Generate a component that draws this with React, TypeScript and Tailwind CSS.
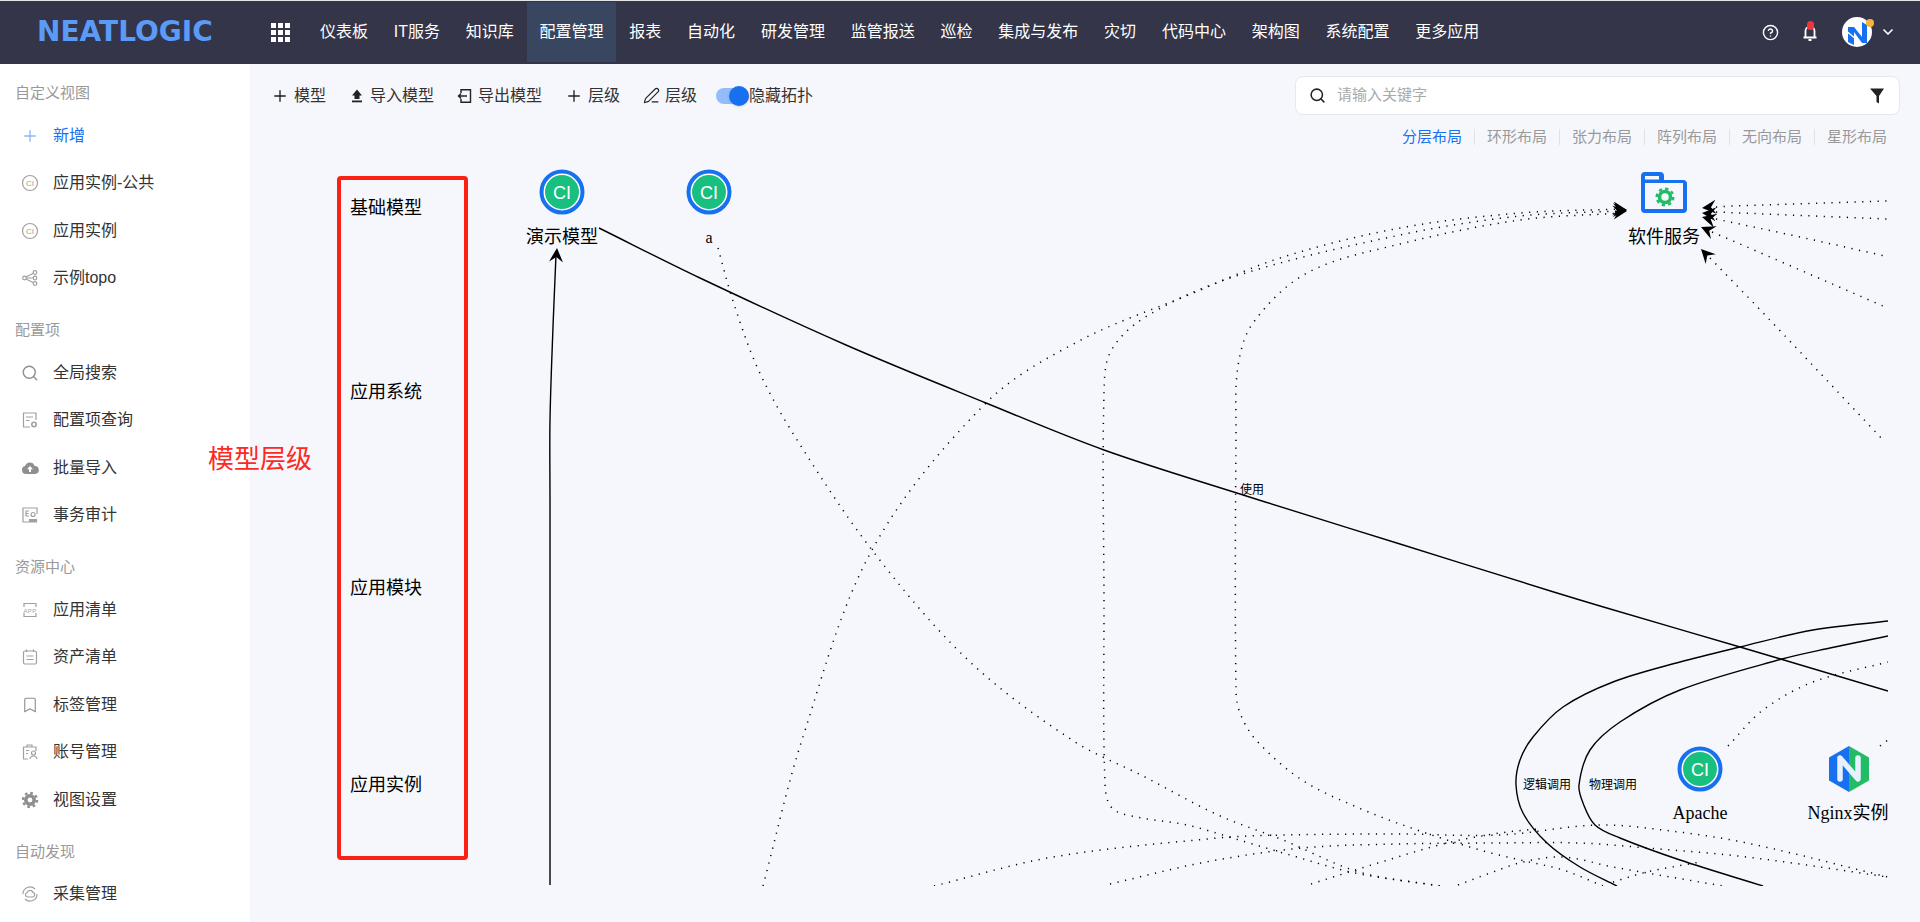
import React from "react";
import { Plus, PenLine, Search, Bookmark, CircleHelp, ChevronDown } from "lucide-react";

// --- data ---
const navItems = ["仪表板", "IT服务", "知识库", "配置管理", "报表", "自动化", "研发管理", "监管报送", "巡检", "集成与发布", "灾切", "代码中心", "架构图", "系统配置", "更多应用"];
const layouts = ["分层布局", "环形布局", "张力布局", "阵列布局", "无向布局", "星形布局"];

// --- sidebar icons ---
const G = ({ children }: { children: React.ReactNode }) => (
  <svg width="18" height="18" viewBox="0 0 18 18" fill="none" stroke="#a0a0a0" strokeWidth="1.2" className="shrink-0">{children}</svg>
);
const IconCi = () => (
  <G>
    <circle cx="9" cy="9" r="7.5" />
    <text x="9" y="12" textAnchor="middle" fontSize="8" fill="#a0a0a0" stroke="none">CI</text>
  </G>
);
const IconTopo = () => (
  <G>
    <circle cx="3.5" cy="9" r="1.8" /><circle cx="14" cy="3.5" r="1.8" /><circle cx="14" cy="9" r="1.8" /><circle cx="14" cy="14.5" r="1.8" />
    <path d="M5.3 9H12.2M5 8L12.4 4.3M5 10L12.4 13.7" />
  </G>
);
const IconCfg = () => (
  <G>
    <path d="M9 16H2.5V2H15V9" />
    <path d="M5 6H12M5 9.5H8.5" />
    <circle cx="13" cy="13.5" r="2.2" strokeWidth="1.6" />
  </G>
);
const IconCloud = () => (
  <svg width="18" height="18" viewBox="0 0 18 18" className="shrink-0">
    <path d="M5 15a4 4 0 0 1-.9-7.900A5 5 0 0 1 13.600 7 4 4 0 0 1 14 15Z" fill="#8f8f8f" />
    <path d="M9 7l3 3.200h-2V13H8v-2.800H6Z" fill="#fff" />
  </svg>
);
const IconAudit = () => (
  <G>
    <path d="M8 16H2V2H16V8" />
    <path d="M8 5H5V10H8M5 7.500H7.500" />
    <circle cx="12" cy="8.500" r="2" />
    <path d="M8.500 16V13.500H15.500V16Z" fill="#a0a0a0" />
  </G>
);
const IconApp = () => (
  <G>
    <path d="M3 6V2.500H15V6M3 12V15.500H15V12" />
    <text x="9" y="11.500" textAnchor="middle" fontSize="6" fill="#a0a0a0" stroke="none" letterSpacing="0.4">APP</text>
  </G>
);
const IconAsset = () => (
  <G>
    <rect x="2.500" y="3" width="13" height="13" rx="1.500" />
    <path d="M5.500 1.500V4M12.500 1.500V4M5.500 8H12.500M5.500 11.500H12.500" />
  </G>
);
const IconAccount = () => (
  <G>
    <path d="M7 16H2.500V4H15V8" />
    <path d="M6 4V2H11V4M5 7.500H8M5 10.500H7" />
    <circle cx="12.500" cy="10" r="2" />
    <path d="M9 16c.3-2 1.700-3 3.500-3s3.200 1 3.500 3" />
  </G>
);
const IconGear = () => (
  <G>
    <circle cx="9" cy="9" r="4.200" strokeWidth="3.600" stroke="#8f8f8f" />
    <circle cx="9" cy="9" r="7" strokeWidth="2.400" stroke="#8f8f8f" strokeDasharray="2.700 2.800" />
  </G>
);
const IconCollect = () => (
  <G>
    <path d="M2 9a7 7 0 0 1 12-5M16 9a7 7 0 0 1-12 5" />
    <path d="M6.500 12a2.300 2.300 0 0 1-.3-4.500 3 3 0 0 1 5.700-.2 2.400 2.400 0 0 1-.2 4.700Z" />
  </G>
);
const SideSearch = () => <Search size={18} color="#8f8f8f" strokeWidth={1.8} className="shrink-0" />;
const SideMark = () => <Bookmark size={18} color="#8f8f8f" strokeWidth={1.5} className="shrink-0" />;

const sideGroups = [
  {
    title: "自定义视图",
    items: [
      { label: "新增", icon: <Plus size={18} color="#8ab8f8" strokeWidth={1.8} className="shrink-0" />, active: true },
      { label: "应用实例-公共", icon: <IconCi /> },
      { label: "应用实例", icon: <IconCi /> },
      { label: "示例topo", icon: <IconTopo /> },
    ],
  },
  {
    title: "配置项",
    items: [
      { label: "全局搜索", icon: <SideSearch /> },
      { label: "配置项查询", icon: <IconCfg /> },
      { label: "批量导入", icon: <IconCloud /> },
      { label: "事务审计", icon: <IconAudit /> },
    ],
  },
  {
    title: "资源中心",
    items: [
      { label: "应用清单", icon: <IconApp /> },
      { label: "资产清单", icon: <IconAsset /> },
      { label: "标签管理", icon: <SideMark /> },
      { label: "账号管理", icon: <IconAccount /> },
      { label: "视图设置", icon: <IconGear /> },
    ],
  },
  { title: "自动发现", items: [{ label: "采集管理", icon: <IconCollect /> }] },
];

// --- graph helpers ---
type Pt = [number, number];
const unit = (a: Pt, b: Pt): Pt => {
  const l = Math.hypot(b[0] - a[0], b[1] - a[1]) || 1;
  return [(b[0] - a[0]) / l, (b[1] - a[1]) / l];
};
// smooth curve through points, tangents scaled by segment length
const spline = (pts: Pt[]) => {
  let d = `M${pts[0][0]} ${pts[0][1]}`;
  for (let i = 0; i < pts.length - 1; i++) {
    const p0 = pts[i - 1] || pts[i];
    const p1 = pts[i];
    const p2 = pts[i + 1];
    const p3 = pts[i + 2] || p2;
    const len = Math.hypot(p2[0] - p1[0], p2[1] - p1[1]) / 3;
    const t1 = unit(p0, p2);
    const t2 = unit(p1, p3);
    d += `C${p1[0] + t1[0] * len} ${p1[1] + t1[1] * len} ${p2[0] - t2[0] * len} ${p2[1] - t2[1] * len} ${p2[0]} ${p2[1]}`;
  }
  return d;
};

const solidLines: Pt[][] = [
  [[599, 228], [700, 278], [846, 345], [986, 403], [1104, 450], [1240, 494], [1400, 544], [1580, 600], [1740, 647], [1888, 691]],
  [[550, 885], [550, 500], [550, 420], [553, 327], [556, 255]],
  [[1888, 621], [1813, 630], [1740, 647], [1680, 662], [1613, 682], [1563, 707], [1533, 737], [1520, 760], [1516, 785], [1523, 813], [1547, 843], [1580, 867], [1617, 886]],
  [[1888, 636], [1830, 648], [1782, 659], [1680, 690], [1620, 722], [1590, 750], [1579, 785], [1583, 803], [1595, 825], [1620, 838], [1680, 860], [1763, 886]],
];

const dottedLines: Pt[][] = [
  [[718, 248], [733, 301], [758, 369], [794, 435], [872, 550], [968, 660], [1072, 740], [1145, 777], [1218, 815], [1283, 840], [1359, 872], [1440, 886]],
  [[763, 886], [802, 740], [872, 550], [986, 403], [1079, 341], [1191, 294], [1280, 258], [1400, 228], [1520, 213], [1622, 209]],
  [[1440, 886], [1355, 873], [1290, 855], [1239, 840], [1187, 825], [1137, 817], [1112, 808], [1105, 783], [1104, 600], [1104, 394], [1111, 351], [1147, 316], [1236, 276], [1400, 235], [1520, 216], [1622, 211]],
  [[1603, 886], [1563, 870], [1520, 860], [1480, 850], [1417, 830], [1359, 808], [1302, 780], [1256, 740], [1240, 713], [1236, 690], [1236, 431], [1238, 366], [1253, 323], [1307, 273], [1400, 244], [1520, 220], [1622, 213]],
  [[934, 886], [1053, 857], [1218, 838], [1283, 835], [1398, 834], [1500, 835], [1597, 825], [1663, 830], [1747, 843], [1888, 877]],
  [[1110, 884], [1206, 862], [1302, 848], [1397, 844], [1500, 843], [1580, 843], [1647, 848], [1747, 857], [1888, 877]],
  [[1311, 884], [1378, 863], [1447, 843], [1500, 833], [1537, 829]],
  [[1458, 885], [1493, 872], [1523, 862], [1563, 857], [1613, 867], [1723, 886]],
  [[1613, 882], [1647, 872], [1700, 862]],
  [[1728, 746], [1763, 710], [1813, 682], [1888, 662]],
  [[1880, 746], [1888, 740]],
  [[1716, 207], [1733, 206], [1887, 201]],
  [[1716, 212], [1887, 219]],
  [[1716, 219], [1800, 237], [1885, 256]],
  [[1712, 232], [1747, 247], [1883, 306]],
  [[1710, 258], [1767, 317], [1885, 442]],
];

const arrows = [
  { x: 557, y: 248, a: -86 },
  { x: 1627, y: 210, a: 6 },
  { x: 1627, y: 210, a: 0 },
  { x: 1627, y: 211, a: -6 },
  { x: 1702, y: 208, a: 175 },
  { x: 1702, y: 213, a: 185 },
  { x: 1702, y: 217, a: 195 },
  { x: 1701, y: 227, a: 204 },
  { x: 1701, y: 249, a: 226 },
];

const CiNode = ({ x, y }: { x: number; y: number }) => (
  <g>
    <circle cx={x} cy={y} r={20.5} fill="#fff" stroke="#1670f0" strokeWidth={4} />
    <circle cx={x} cy={y} r={17} fill="#19bf7f" />
    <text x={x} y={y + 6.5} textAnchor="middle" fontSize={18} fill="#fff" className="font-['Liberation_Sans',sans-serif]">CI</text>
  </g>
);

const Label = ({ x, y, size = 18, serif, children }: { x: number; y: number; size?: number; serif?: boolean; children: React.ReactNode }) => (
  <text
    x={x}
    y={y}
    textAnchor="middle"
    fontSize={size}
    fill="#000"
    className={serif ? "font-['Liberation_Serif','Noto_Sans_CJK_SC',serif]" : "font-['Liberation_Sans','Noto_Sans_CJK_SC',sans-serif]"}
  >
    {children}
  </text>
);

const Graph = () => (
  <svg viewBox="250 160 1638 726" className="absolute left-0 top-0 w-[1638px] h-[726px]" fill="none">
    {dottedLines.map((p, i) => (
      <path key={i} d={spline(p)} stroke="#000" strokeWidth={1.5} strokeDasharray="1.2 6.5" />
    ))}
    {solidLines.map((p, i) => (
      <path key={i} d={spline(p)} stroke="#000" strokeWidth={1.4} />
    ))}
    {arrows.map((a, i) => (
      <path key={i} transform={`translate(${a.x} ${a.y}) rotate(${a.a})`} d="M0 0L-14 -7L-9 0L-14 7Z" fill="#000" />
    ))}

    <CiNode x={562} y={192} />
    <Label x={562} y={243}>演示模型</Label>
    <CiNode x={709} y={192} />
    <Label x={709} y={243} size={16} serif>a</Label>

    {/* 软件服务 folder */}
    <path fill="#1670f0" d="M1645 172h15a4 4 0 0 1 4 4v4h19a4 4 0 0 1 4 4v25a4 4 0 0 1-4 4h-38a4 4 0 0 1-4-4v-33a4 4 0 0 1 4-4Z" />
    <rect x="1645" y="183" width="38" height="26" fill="#f5f7fc" />
    <rect x="1645" y="176" width="14" height="3.5" fill="#f5f7fc" />
    <circle cx="1665" cy="197" r="5.5" stroke="#22bb66" strokeWidth="3.5" />
    <circle cx="1665" cy="197" r="8.3" stroke="#22bb66" strokeWidth="2.4" strokeDasharray="3.3 3.2" />
    <Label x={1664} y={243}>软件服务</Label>

    <CiNode x={1700} y={769} />
    <Label x={1700} y={819} serif>Apache</Label>

    {/* Nginx hexagon */}
    <path d="M1849 746V792L1829 780.5V757.5Z" fill="#1670f0" />
    <path d="M1849 746V792L1869 780.5V757.5Z" fill="#22bb66" />
    <path d="M1840 779V758L1858 779V758" stroke="#e8f0fe" strokeWidth={5.5} strokeLinecap="round" strokeLinejoin="round" />
    <Label x={1848} y={819} serif>Nginx实例</Label>

    <Label x={1252} y={494} size={12}>使用</Label>
    <Label x={1547} y={789} size={12}>逻辑调用</Label>
    <Label x={1613} y={789} size={12}>物理调用</Label>
  </svg>
);

const ToolItem = ({ icon, label }: { icon: React.ReactNode; label: string }) => (
  <div className="flex items-center gap-[5px] text-[16px] text-[#333]">
    {icon}
    <span>{label}</span>
  </div>
);

const IconUpload = () => (
  <svg width="16" height="16" viewBox="0 0 16 16" fill="#222">
    <path d="M8 1.5L13 7.5H10.5V11H5.5V7.5H3Z" />
    <rect x="3" y="12.5" width="10" height="1.8" />
  </svg>
);
const IconExport = () => (
  <svg width="16" height="16" viewBox="0 0 16 16" fill="none" stroke="#222" strokeWidth="1.4">
    <path d="M4 5V1.700H13.500V14.300H4V11" />
    <path d="M10 8H1.500M4 5.500L1.500 8L4 10.500" />
  </svg>
);

export default function App() {
  return (
    <div className="w-full h-screen overflow-hidden flex flex-col bg-[#f5f7fc] font-['Liberation_Sans','Noto_Sans_CJK_SC',sans-serif]">
      <div className="h-px bg-[#e6e6e6] shrink-0"></div>

      {/* TOP NAV */}
      <header className="h-[63px] shrink-0 bg-[#343548] flex items-start text-white">
        <div className="h-[62px] flex items-center pl-[37px] w-[271px] shrink-0">
          <span className="text-[28px] leading-none font-bold text-[#5a9bf8] font-['DejaVu_Sans',sans-serif]">NEATLOGIC</span>
        </div>
        <div className="h-[62px] flex items-center shrink-0 mr-[17px]">
          <div className="grid grid-cols-3 gap-[2px]">
            {[...Array(9)].map((_, i) => <div key={i} className="w-[5px] h-[5px] bg-white"></div>)}
          </div>
        </div>
        <nav className="flex mt-px">
          {navItems.map((n) => (
            <div key={n} className={`h-[60px] px-[12.9px] flex items-center text-[16px] ${n === "配置管理" ? "bg-[#38475f]" : ""}`}>{n}</div>
          ))}
        </nav>
        <div className="ml-auto h-[62px] flex items-center pr-[24px]">
          <CircleHelp size={17} strokeWidth={2} />
          <div className="relative ml-[23px]">
            <svg width="16" height="20" viewBox="0 0 16 20" fill="none" stroke="#fff" strokeWidth="1.8">
              <path d="M3.500 15V9a4.500 4.500 0 0 1 9 0v6M1.500 15.500H14.500" />
              <path d="M6.500 18H9.500" strokeWidth="2" />
            </svg>
            <div className="absolute left-[5px] -top-[1px] w-[7px] h-[9px] rounded-full bg-[#f0353b]"></div>
          </div>
          <div className="relative ml-[24px]">
            <svg width="30" height="30" viewBox="0 0 30 30">
              <circle cx="15" cy="15" r="15" fill="#fff" />
              <path d="M6 25V10l6 0 8 10V5l5 3v18l-5 0-8-11v13Z" fill="#1670f0" />
              <path d="M3 13L20 27" stroke="#fff" strokeWidth="1.5" />
            </svg>
            <div className="absolute right-[-2px] top-[2px] w-[8px] h-[8px] rounded-full bg-[#f7b33c]"></div>
          </div>
          <ChevronDown size={16} strokeWidth={2.5} className="ml-[8px]" />
        </div>
      </header>

      <div className="flex-1 flex min-h-0 relative">
        {/* SIDEBAR */}
        <aside className="w-[250px] shrink-0 bg-white pt-[11px] overflow-hidden">
          {sideGroups.map((g) => (
            <div key={g.title} className="mb-[10px]">
              <div className="h-[37px] pl-[15px] flex items-center text-[15px] text-[#999]">{g.title}</div>
              {g.items.map((it: any) => (
                <div key={it.label} className={`h-[47.5px] pl-[21px] flex items-center gap-[14px] text-[16px] ${it.active ? "text-[#1670f0]" : "text-[#333]"}`}>
                  {it.icon}
                  <span>{it.label}</span>
                </div>
              ))}
            </div>
          ))}
        </aside>

        {/* MAIN */}
        <main className="flex-1 min-w-0 flex flex-col">
          <div className="h-[96px] shrink-0 pt-3 pl-[21px] pr-[20px]">
            <div className="flex items-center">
              <div className="flex items-center gap-[23px]">
                <ToolItem icon={<Plus size={18} strokeWidth={1.8} color="#222" />} label="模型" />
                <ToolItem icon={<IconUpload />} label="导入模型" />
                <ToolItem icon={<IconExport />} label="导出模型" />
                <ToolItem icon={<Plus size={18} strokeWidth={1.8} color="#222" />} label="层级" />
                <ToolItem icon={<PenLine size={17} strokeWidth={1.6} color="#222" />} label="层级" />
                <div className="flex items-center ml-[-4px] text-[16px] text-[#333]">
                  <div className="relative w-[33px] h-[16px] rounded-full bg-[#93bdf9]">
                    <div className="absolute right-0 top-[-2px] w-[20px] h-[20px] rounded-full bg-[#1670f0] shadow-sm"></div>
                  </div>
                  <span>隐藏拓扑</span>
                </div>
              </div>
              <div className="ml-auto w-[605px] h-[39px] bg-white border border-[#e6e8ee] rounded-[8px] flex items-center pl-[13px] pr-[14px]">
                <Search size={17} strokeWidth={2.2} color="#222" />
                <span className="ml-[11px] text-[15px] text-[#aaa]">请输入关键字</span>
                <svg width="16" height="18" viewBox="0 0 16 18" className="ml-auto" fill="#222">
                  <path d="M1 1.500H15L10 9V16.500L7.500 15V9Z" />
                </svg>
              </div>
            </div>
            <div className="flex justify-end items-center mt-3 pr-[13px] text-[15px] leading-[20px] text-[#999]">
              {layouts.map((l, i) => (
                <React.Fragment key={l}>
                  {i > 0 && <div className="w-px h-[16px] mx-[12px] bg-[#e2e2e2]"></div>}
                  <span className={i === 0 ? "text-[#1670f0]" : ""}>{l}</span>
                </React.Fragment>
              ))}
            </div>
          </div>

          {/* CANVAS */}
          <div className="relative flex-1 min-h-0">
            <Graph />
          </div>
        </main>

        {/* annotation over the canvas: red box with level names */}
        <div className="absolute left-[337px] top-[112px] w-[131px] h-[684px] border-[4px] border-[#fc1f14] rounded-[4px] text-[18px] leading-[24px] text-black">
          <span className="absolute left-[9px] top-[16px] whitespace-nowrap">基础模型</span>
          <span className="absolute left-[9px] top-[200px] whitespace-nowrap">应用系统</span>
          <span className="absolute left-[9px] top-[396px] whitespace-nowrap">应用模块</span>
          <span className="absolute left-[9px] top-[593px] whitespace-nowrap">应用实例</span>
        </div>
        <div className="absolute left-[208px] top-[377px] text-[26px] leading-[36px] text-[#fc2a1f] whitespace-nowrap">模型层级</div>
      </div>
    </div>
  );
}
